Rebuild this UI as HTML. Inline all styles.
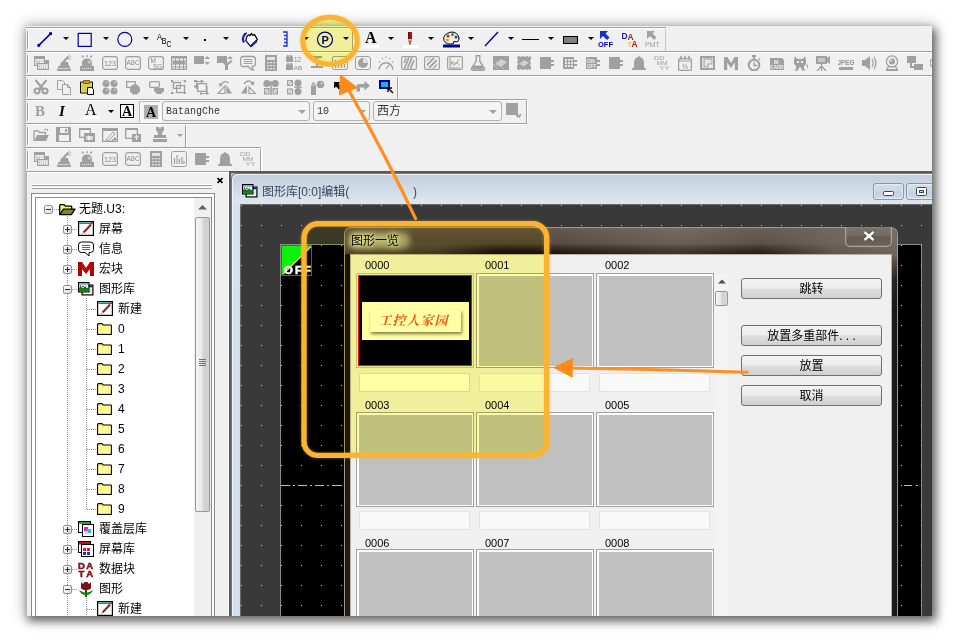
<!DOCTYPE html><html lang="zh"><head><meta charset="utf-8"><title>图形一览</title><style>
*{box-sizing:border-box;margin:0;padding:0}
html,body{width:958px;height:642px;overflow:hidden;background:#fff}
body{position:relative;font-family:"Liberation Sans","Noto Sans CJK SC","WenQuanYi Zen Hei",sans-serif;font-size:12px;color:#000}
.abs,.abs *{position:absolute}
#shadow{position:absolute;left:26px;top:26px;width:906px;height:590px;background:#f0f0f0;
 box-shadow:3px 4px 9px 1px rgba(0,0,0,.55), 0 0 14px 2px rgba(0,0,0,.22)}
#clip{position:absolute;left:26px;top:26px;width:906px;height:590px;overflow:hidden;background:#f0f0f0}
#page{position:absolute;left:-26px;top:-26px;width:958px;height:642px}
#page div,#page span,#page svg,#ann,#ann div,#ann svg{position:absolute}
#ann{left:0;top:0;width:958px;height:642px}
.hl{left:26px;width:906px;height:2px;border-top:1px solid #a0a0a0;background:#fff}
.grip{width:2px;height:18px;border-left:1px solid #a0a0a0;border-right:1px solid #fff}
.vsep{width:2px;border-left:1px solid #a0a0a0;border-right:1px solid #fff}
.dd{width:0;height:0;border-left:3px solid transparent;border-right:3px solid transparent;border-top:3px solid #000}
.combo{border:1px solid #b0b0b0;border-radius:3px;background:#f4f4f4;height:20px}
.combo .t{left:3px;top:2px;font-size:12px;line-height:14px;color:#333;white-space:nowrap}
.cjk{font-family:"Liberation Sans","Noto Sans CJK SC","WenQuanYi Zen Hei",sans-serif;font-size:12px;line-height:14px;white-space:nowrap;color:#000}
.combo .mono,.mono{font-family:"Liberation Mono","Noto Sans CJK SC",monospace;font-size:10px;letter-spacing:0}
.lbl{font-size:11px;line-height:12px;white-space:nowrap}
.thumb{width:118px;height:95px;border:1px solid #a0a0a0;background:#fcfcfc;padding:0}
.thumb i{left:1.5px;top:1.5px;right:1.5px;bottom:1.5px;background:#c0c0c0;display:block;position:absolute}
.fld{width:111px;height:19px;border:1px solid #e2e2e2;border-radius:2px;background:#f9f9f9}
.btn{width:141px;height:21px;border:1px solid #707070;border-radius:3px;
 background:linear-gradient(#f4f4f4 0,#ececec 48%,#dedede 52%,#d0d0d0 100%);text-align:center}
.btn span{position:static!important;font-size:12px;line-height:21px}
</style></head><body>
<div id="shadow"></div><div id="clip"><div id="page">
<div class="hl" style="top:27px;width:640px"></div>
<div class="hl" style="top:51px;width:906px"></div>
<div class="hl" style="top:75px;width:906px"></div>
<div class="hl" style="top:99px;width:501px"></div>
<div class="hl" style="top:123px;width:501px"></div>
<div class="hl" style="top:147px;width:235px"></div>
<div class="hl" style="top:171px;width:235px"></div>
<div class="grip" style="left:27px;top:31px"></div>
<div class="grip" style="left:27px;top:55px"></div>
<div class="grip" style="left:27px;top:79px"></div>
<div class="grip" style="left:27px;top:103px"></div>
<div class="grip" style="left:27px;top:127px"></div>
<div class="grip" style="left:27px;top:151px"></div>
<svg style="left:37px;top:31px" width="16" height="16" viewBox="0 0 16 16" ><path d="M1.8 14.4 L13.6 2.6" stroke="#0000a0" stroke-width="1.5"/><rect x=".4" y="13" width="2.8" height="2.8" fill="#0000a0"/><rect x="12.2" y="1.2" width="2.8" height="2.8" fill="#0000a0"/></svg>
<div class="dd" style="left:63px;top:37px"></div>
<svg style="left:77px;top:31px" width="16" height="16" viewBox="0 0 16 16" ><rect x="1.2" y="2.4" width="13" height="13" fill="none" stroke="#0000a0" stroke-width="1.2"/></svg>
<div class="dd" style="left:103px;top:37px"></div>
<svg style="left:117px;top:31px" width="16" height="16" viewBox="0 0 16 16" ><circle cx="7.8" cy="8.4" r="7" fill="none" stroke="#0000a0" stroke-width="1.2"/></svg>
<div class="dd" style="left:143px;top:37px"></div>
<svg style="left:156px;top:31px" width="17" height="18" viewBox="0 0 17 18" ><text x="1" y="8.6" font-family="Liberation Sans,sans-serif" font-size="9.4" fill="#000" textLength="5" lengthAdjust="spacingAndGlyphs">A</text><text x="5.6" y="12.6" font-family="Liberation Sans,sans-serif" font-size="9.4" fill="#000" textLength="5" lengthAdjust="spacingAndGlyphs">B</text><text x="10.6" y="16.4" font-family="Liberation Sans,sans-serif" font-size="9.4" fill="#000" textLength="5" lengthAdjust="spacingAndGlyphs">C</text></svg>
<div class="dd" style="left:183px;top:37px"></div>
<div style="left:204px;top:39px;width:2px;height:2px;background:#000"></div>
<div class="dd" style="left:223px;top:37px"></div>
<svg style="left:241px;top:32px" width="18" height="16" viewBox="0 0 18 16" ><path d="M6 4.2 L8 2.6 L9 3.8 L10.4 1.4 L12 3.6 L13.4 2.4 L16.4 7.6 L9.8 14.6 L4.8 8.6 Z" fill="#fff" stroke="#000" stroke-width="1.2" stroke-linejoin="round"/><path d="M15.6 8.8 L10 14.2" stroke="#1020c8" stroke-width="2.4"/><path d="M4.6 1.6 q-4.4 3.4 -1.6 9" fill="none" stroke="#1020c8" stroke-width="2.2"/><path d="M3.4 2.2 l2.4 -1.2" stroke="#1020c8" stroke-width="1.6"/></svg>
<svg style="left:281px;top:31px" width="8" height="16" viewBox="0 0 8 16" ><path d="M2 1 h4 v14 h-4 M3 4.5 h3 M3 8 h3 M3 11.5 h3" fill="none" stroke="#2030c0" stroke-width="1.3"/></svg>
<div class="dd" style="left:303px;top:37px"></div>
<svg style="left:316px;top:31px" width="18" height="18" viewBox="0 0 18 18" ><circle cx="9" cy="8.6" r="7.5" fill="none" stroke="#0000a0" stroke-width="1.2"/><text x="9.2" y="12.6" font-family="Liberation Sans,sans-serif" font-size="11" font-weight="bold" fill="#0000a0" text-anchor="middle">P</text></svg>
<div class="dd" style="left:343px;top:37px"></div>
<div class="vsep" style="left:352px;top:29px;height:20px"></div>
<span style="left:365px;top:30px;font-family:'Liberation Serif',serif;font-weight:bold;font-size:16px;line-height:16px;color:#000">A</span>
<div style="left:364px;top:45px;width:15px;height:3px;background:#fff"></div>
<div class="dd" style="left:388px;top:37px"></div>
<svg style="left:407px;top:32px" width="6" height="14" viewBox="0 0 6 14" ><rect x="1" y="0" width="4" height="7" fill="#b01010"/><rect x="1" y="0" width="1.3" height="7" fill="#700808"/><rect x="1" y="7" width="4" height="1.5" fill="#e0c040"/><path d="M1 8.5 h4 l-2 4.5 Z" fill="#907040"/><path d="M2.4 11.5 l.6 1.8 l.6 -1.8 Z" fill="#000"/></svg>
<div style="left:403px;top:45px;width:16px;height:3px;background:#fff"></div>
<div class="dd" style="left:428px;top:37px"></div>
<svg style="left:443px;top:31px" width="17" height="17" viewBox="0 0 17 17" ><path d="M8 1 q7 0 8 6 q0 5 -4 3.5 q-2 -.5 -1.5 2 q-7 2 -9.5 -3 q-2 -6 7 -8.5 Z" fill="#f4f0e0" stroke="#000" stroke-width="1"/><circle cx="5" cy="5" r="1.5" fill="#d02020"/><circle cx="9.5" cy="3.5" r="1.5" fill="#20a020"/><circle cx="13" cy="6" r="1.5" fill="#2040d0"/><circle cx="4.5" cy="9" r="1.5" fill="#d0a020"/><rect x="0" y="13.5" width="17" height="3" fill="#0000a0"/></svg>
<div class="dd" style="left:468px;top:37px"></div>
<svg style="left:484px;top:31px" width="16" height="16" viewBox="0 0 16 16" ><path d="M1 15 L14 1" stroke="#0000a0" stroke-width="1.4"/></svg>
<div class="dd" style="left:508px;top:37px"></div>
<div style="left:522px;top:39px;width:17px;height:1px;background:#000"></div>
<div class="dd" style="left:548px;top:37px"></div>
<div style="left:563px;top:36px;width:15px;height:8px;background:#808080;border:1px solid #000"></div>
<div class="dd" style="left:588px;top:37px"></div>
<svg style="left:598px;top:30px" width="18" height="18" viewBox="0 0 18 18" ><path d="M2 1 h8 l-2.5 2.5 l4 4 l-2.5 2.5 l-4 -4 L2 9 Z" fill="#1030d0"/><text x="0" y="17" font-family="Liberation Sans,sans-serif" font-size="7.5" font-weight="bold" fill="#0000c0" text-anchor="start">OFF</text></svg>
<svg style="left:621px;top:31px" width="18" height="18" viewBox="0 0 18 18" ><text x="0.6" y="8" font-family="Liberation Sans,sans-serif" font-size="8.4" font-weight="bold" fill="#2020b0" text-anchor="start">D</text><text x="6.6" y="9" font-family="Liberation Sans,sans-serif" font-size="8.4" font-weight="bold" fill="#c81010" text-anchor="start">A</text><text x="6.2" y="15.6" font-family="Liberation Sans,sans-serif" font-size="8" font-weight="bold" fill="#f0d030" text-anchor="start">T</text><text x="10.6" y="16" font-family="Liberation Sans,sans-serif" font-size="8.4" font-weight="bold" fill="#c81010" text-anchor="start">A</text></svg>
<svg style="left:644px;top:30px" width="18" height="18" viewBox="0 0 18 18" ><path d="M3 1 h8 l-2.5 2.5 l4 4 l-2.5 2.5 l-4 -4 L3 9 Z" fill="#a0a0a0" stroke="none" stroke-width="1" /><text x="1" y="17" font-family="Liberation Sans,sans-serif" font-size="7" font-weight="normal" fill="#a0a0a0" text-anchor="start">PMT</text></svg>
<div style="left:665px;top:29px;width:1px;height:22px;background:#c8c8c8"></div>
<svg style="left:33px;top:55px" width="16" height="16" viewBox="0 0 16 16" ><rect x="1" y="1" width="11" height="3" fill="#a0a0a0"/><rect x="1.6" y="1.6" width="9.8" height="8.8" rx="0" fill="none" stroke="#a0a0a0" stroke-width="1.2"/><path d="M3 6 h7 M3 8 h4" fill="none" stroke="#a0a0a0" stroke-width="1" stroke-dasharray="1.5 1"/><rect x="4" y="9" width="12" height="6" fill="#f0f0f0"/><rect x="4.6" y="8.6" width="10.8" height="5.8" rx="0" fill="none" stroke="#a0a0a0" stroke-width="1.2"/><rect x="11" y="5" width="5" height="4" fill="#a0a0a0"/><path d="M6 11 h8 M6 13 h8" fill="none" stroke="#a0a0a0" stroke-width="1" stroke-dasharray="1 1"/></svg>
<svg style="left:56px;top:55px" width="16" height="16" viewBox="0 0 16 16" ><path d="M5 7 h7 l1 4 h-9 Z" fill="#a0a0a0" stroke="none" stroke-width="1" /><rect x="2" y="11" width="12" height="2" fill="#a0a0a0"/><rect x="1" y="13.6" width="14" height="2.4" fill="#a0a0a0"/><path d="M7 7.5 L12.5 1.5" fill="none" stroke="#a0a0a0" stroke-width="2.2" /><path d="M13 0 l1 1 M15 1 l-1 1 M15 3.5 l-1 .5 M12 3 l2 2" fill="none" stroke="#a0a0a0" stroke-width="0.9" /></svg>
<svg style="left:79px;top:55px" width="16" height="16" viewBox="0 0 16 16" ><path d="M3 11 V8 Q3 3.5 8 3.5 Q13 3.5 13 8 V11 Z" fill="#a0a0a0" stroke="none" stroke-width="1" /><rect x="1" y="11" width="14" height="5" fill="#a0a0a0"/><path d="M3 13.5 h10" fill="none" stroke="#e8e8e8" stroke-width="1" stroke-dasharray="1 1"/><circle cx="10.5" cy="7" r="1.6" fill="#c8c8c8"/><path d="M8 0 v2.2 M3 .5 l1.6 2 M13 .5 l-1.6 2" fill="none" stroke="#a0a0a0" stroke-width="1.3" /></svg>
<svg style="left:102px;top:55px" width="16" height="16" viewBox="0 0 16 16" ><rect x="0.6" y="1.6" width="14.8" height="12.8" rx="2.5" fill="none" stroke="#a0a0a0" stroke-width="1.2"/><text x="8" y="10.6" font-family="Liberation Sans,sans-serif" font-size="7.2" font-weight="normal" fill="#8a8a8a" text-anchor="middle">123</text></svg>
<svg style="left:125px;top:55px" width="16" height="16" viewBox="0 0 16 16" ><rect x="0.6" y="1.6" width="14.8" height="12.8" rx="2.5" fill="none" stroke="#a0a0a0" stroke-width="1.2"/><text x="8" y="10.4" font-family="Liberation Sans,sans-serif" font-size="6.4" font-weight="normal" fill="#8a8a8a" text-anchor="middle">ABC</text></svg>
<svg style="left:148px;top:55px" width="16" height="16" viewBox="0 0 16 16" ><rect x="0.6" y="1.6" width="14.8" height="12.8" rx="2.5" fill="none" stroke="#a0a0a0" stroke-width="1.2"/><text x="2.5" y="7.8" font-family="Liberation Sans,sans-serif" font-size="6.5" font-weight="normal" fill="#8a8a8a" text-anchor="start">M</text><text x="5" y="13.6" font-family="Liberation Sans,sans-serif" font-size="6.5" font-weight="normal" fill="#8a8a8a" text-anchor="start">SG</text></svg>
<svg style="left:171px;top:55px" width="16" height="16" viewBox="0 0 16 16" ><rect x="0.6" y="1.6" width="14.8" height="12.8" rx="0" fill="none" stroke="#a0a0a0" stroke-width="1.2"/><rect x="0" y="1" width="16" height="2.5" fill="#a0a0a0"/><path d="M0 6 h16 M0 9 h16 M0 12 h16 M4.5 1 v14 M8.5 1 v14 M12.5 1 v14" fill="none" stroke="#a0a0a0" stroke-width="1" /><rect x="2" y="6" width="12" height="3" fill="#a0a0a0"/></svg>
<svg style="left:194px;top:55px" width="16" height="16" viewBox="0 0 16 16" ><rect x="0" y="1" width="10" height="8" fill="#a0a0a0"/><path d="M13.2 1 l2.8 3 h-5.6 Z M13.2 10 l2.8 -3 h-5.6 Z" fill="#a0a0a0" stroke="none" stroke-width="1" /></svg>
<svg style="left:217px;top:55px" width="16" height="16" viewBox="0 0 16 16" ><rect x="0" y="1" width="10" height="7" fill="#a0a0a0"/><path d="M13.2 1 l2.8 3 h-5.6 Z" fill="#a0a0a0" stroke="none" stroke-width="1" /><path d="M6 8 h4 l4 -3 l1.5 1.5 L11 10 v5 h-3 v-5 Z" fill="#a0a0a0" stroke="none" stroke-width="1" /></svg>
<svg style="left:240px;top:55px" width="16" height="16" viewBox="0 0 16 16" ><path d="M3.5 1.5 h9 q3 0 3 3 v4 q0 3 -3 3 h-.5 q0 2.5 2 3.5 q-4 0 -5.5 -3.5 h-5 q-3 0 -3 -3 v-4 q0 -3 3 -3 Z" fill="none" stroke="#a0a0a0" stroke-width="1.3" /><rect x="3.5" y="4" width="9" height="1" fill="#a0a0a0"/><rect x="3.5" y="6" width="9" height="1" fill="#a0a0a0"/><rect x="3.5" y="8" width="9" height="1" fill="#a0a0a0"/></svg>
<svg style="left:263px;top:55px" width="16" height="16" viewBox="0 0 16 16" ><rect x="2" y="0" width="12" height="16" fill="#a0a0a0"/><rect x="4" y="2" width="8" height="3" fill="#e4e4e4"/><rect x="4.2" y="7" width="1.6" height="1.4" fill="#ececec"/><rect x="4.2" y="10" width="1.6" height="1.4" fill="#ececec"/><rect x="4.2" y="13" width="1.6" height="1.4" fill="#ececec"/><rect x="7.2" y="7" width="1.6" height="1.4" fill="#ececec"/><rect x="7.2" y="10" width="1.6" height="1.4" fill="#ececec"/><rect x="7.2" y="13" width="1.6" height="1.4" fill="#ececec"/><rect x="10.2" y="7" width="1.6" height="1.4" fill="#ececec"/><rect x="10.2" y="10" width="1.6" height="1.4" fill="#ececec"/><rect x="10.2" y="13" width="1.6" height="1.4" fill="#ececec"/></svg>
<svg style="left:286px;top:55px" width="16" height="16" viewBox="0 0 16 16" ><rect x="0" y="1.5" width="7" height="5.5" fill="#a0a0a0"/><rect x="0" y="9.5" width="7" height="5.5" fill="#a0a0a0"/><rect x="1" y="0" width="2" height="2" fill="#a0a0a0"/><rect x="4" y="0" width="2" height="2" fill="#a0a0a0"/><rect x="1" y="8" width="2" height="2" fill="#a0a0a0"/><rect x="4" y="8" width="2" height="2" fill="#a0a0a0"/><text x="8" y="7" font-family="Liberation Sans,sans-serif" font-size="6.4" font-weight="normal" fill="#8a8a8a" text-anchor="start">12</text><text x="7.8" y="15" font-family="Liberation Sans,sans-serif" font-size="6.2" font-weight="normal" fill="#8a8a8a" text-anchor="start">AB</text></svg>
<svg style="left:309px;top:55px" width="16" height="16" viewBox="0 0 16 16" ><rect x="3" y="1" width="10" height="2" fill="#a0a0a0"/><rect x="7" y="3" width="2" height="8" fill="#a0a0a0"/><rect x="2" y="11" width="12" height="2" fill="#a0a0a0"/><rect x="4" y="6" width="8" height="1" fill="#a0a0a0"/></svg>
<svg style="left:332px;top:55px" width="16" height="16" viewBox="0 0 16 16" ><rect x="0.5" y="1.5" width="15" height="13" rx="1.5" fill="none" stroke="#a0a0a0" stroke-width="1"/><path d="M3.5 5 v8 M6.5 8 v5 M9.5 6 v7 M12.5 9 v4" fill="none" stroke="#a0a0a0" stroke-width="1.4" /></svg>
<svg style="left:355px;top:55px" width="16" height="16" viewBox="0 0 16 16" ><rect x="0.5" y="1.5" width="15" height="13" rx="2.5" fill="none" stroke="#a0a0a0" stroke-width="1"/><circle cx="8" cy="8" r="5" fill="#a0a0a0"/><path d="M8 8 V3 A5 5 0 0 1 13 8 Z" fill="#e0e0e0" stroke="none" stroke-width="1" /></svg>
<svg style="left:378px;top:55px" width="16" height="16" viewBox="0 0 16 16" ><path d="M1.2 14.5 A6.8 6.8 0 0 1 14.8 14.5" fill="none" stroke="#a0a0a0" stroke-width="1.4" /><path d="M8 14 L11.5 9.5" fill="none" stroke="#a0a0a0" stroke-width="1.2" /><path d="M1 6.5 l1 1 M4 3 l.8 1.2 M8 1.6 v1.4 M12 3 l-.8 1.2 M15 6.5 l-1 1" fill="none" stroke="#a0a0a0" stroke-width="1.1" /></svg>
<svg style="left:401px;top:55px" width="16" height="16" viewBox="0 0 16 16" ><rect x="0.6" y="1.6" width="14.8" height="12.8" rx="1.5" fill="none" stroke="#a0a0a0" stroke-width="1.2"/><path d="M3.5 13.5 L8 2.5 M6.5 13.5 L11 2.5 M9.5 13.5 L12.8 5.5 M3.2 8 L5.2 3" fill="none" stroke="#a0a0a0" stroke-width="1.7" /></svg>
<svg style="left:424px;top:55px" width="16" height="16" viewBox="0 0 16 16" ><rect x="0.6" y="1.6" width="14.8" height="12.8" rx="1.5" fill="none" stroke="#a0a0a0" stroke-width="1.2"/><clipPath id="hc"><circle cx="8" cy="8" r="5.6"/></clipPath><g clip-path="url(#hc)"><path d="M-1 9 L9 -1 M1 12 L12 1 M4 14 L14 4 M7.5 15.5 L16 7" fill="none" stroke="#a0a0a0" stroke-width="1.8" /></g></svg>
<svg style="left:447px;top:55px" width="16" height="16" viewBox="0 0 16 16" ><rect x="0.6" y="1.6" width="14.8" height="12.8" rx="1.5" fill="none" stroke="#a0a0a0" stroke-width="1.2"/><path d="M3 3 v10 h10.5" fill="none" stroke="#a0a0a0" stroke-width="1" /><path d="M3.5 10 L6 6.5 L8.5 9 L12.5 4 M3.5 6 L7 10.5 L10 7.5 L12.8 10.5" fill="none" stroke="#a0a0a0" stroke-width="1" /></svg>
<svg style="left:470px;top:55px" width="16" height="16" viewBox="0 0 16 16" ><path d="M6.2 .8 h3.6 v5.4 l4.6 6.8 q.8 2.2 -1.6 2.2 h-9.6 q-2.4 0 -1.6 -2.2 l4.6 -6.8 Z" fill="none" stroke="#a0a0a0" stroke-width="1.4" /><path d="M4 10.5 h8 l1.8 3 q0 1 -1 1 h-9.6 q-1 0 -1 -1 Z" fill="#a0a0a0" stroke="none" stroke-width="1" /></svg>
<svg style="left:493px;top:55px" width="16" height="16" viewBox="0 0 16 16" ><rect x="0" y="1" width="16" height="14" fill="#a0a0a0"/><path d="M2 9 L8 4 L14 7 L8 12 Z" fill="#d0d0d0" stroke="none" stroke-width="1" /><path d="M0 9 L5 14 M3 6 L11 14" fill="none" stroke="#c8c8c8" stroke-width="0.8" /></svg>
<svg style="left:516px;top:55px" width="16" height="16" viewBox="0 0 16 16" ><path d="M1 2 l2 -1 l2 1 l2 -1 l2 1 l2 -1 l2 1 l2 -1 v3 l-1 2 l1 2 l-1 2 l1 2 v3 l-2 -1 l-2 1 l-2 -1 l-2 1 l-2 -1 l-2 1 l-2 -1 v-3 l1 -2 l-1 -2 l1 -2 Z" fill="#a0a0a0" stroke="none" stroke-width="1" /><path d="M3 9 L8 5 L13 7.5 L8 11.5 Z" fill="#d0d0d0" stroke="none" stroke-width="1" /></svg>
<svg style="left:539px;top:55px" width="16" height="16" viewBox="0 0 16 16" ><path d="M1 2 h11 v3 h3 v2 h-3 v2 h3 v2 h-3 v3 h-11 Z" fill="#a0a0a0" stroke="none" stroke-width="1" /></svg>
<svg style="left:562px;top:55px" width="16" height="16" viewBox="0 0 16 16" ><path d="M1 2 h11 v3 h3 v2 h-3 v2 h3 v2 h-3 v3 h-11 Z" fill="#a0a0a0" stroke="none" stroke-width="1" /><rect x="3" y="4" width="2" height="2" fill="#e8e8e8"/><rect x="3" y="7" width="2" height="2" fill="#e8e8e8"/><rect x="3" y="10" width="2" height="2" fill="#e8e8e8"/><rect x="6" y="4" width="2" height="2" fill="#e8e8e8"/><rect x="6" y="7" width="2" height="2" fill="#e8e8e8"/><rect x="6" y="10" width="2" height="2" fill="#e8e8e8"/><rect x="9" y="4" width="2" height="2" fill="#e8e8e8"/><rect x="9" y="7" width="2" height="2" fill="#e8e8e8"/><rect x="9" y="10" width="2" height="2" fill="#e8e8e8"/></svg>
<svg style="left:585px;top:55px" width="16" height="16" viewBox="0 0 16 16" ><path d="M1 2 h11 v3 h3 v2 h-3 v2 h3 v2 h-3 v3 h-11 Z" fill="#a0a0a0" stroke="none" stroke-width="1" /><text x="2" y="7.5" font-family="Liberation Sans,sans-serif" font-size="5" font-weight="bold" fill="#f0f0f0" text-anchor="start">ON</text><text x="2" y="12.5" font-family="Liberation Sans,sans-serif" font-size="4.6" font-weight="bold" fill="#f0f0f0" text-anchor="start">OFF</text></svg>
<svg style="left:608px;top:55px" width="16" height="16" viewBox="0 0 16 16" ><path d="M1 2 h11 v3 h3 v2 h-3 v2 h3 v2 h-3 v3 h-11 Z" fill="#a0a0a0" stroke="none" stroke-width="1" /></svg>
<svg style="left:631px;top:55px" width="16" height="16" viewBox="0 0 16 16" ><path d="M8 1 q1 0 1 1 q4 1 4 6 v4 l2 2 v1 h-14 v-1 l2 -2 v-4 q0 -5 4 -6 q0 -1 1 -1 Z" fill="#a0a0a0" stroke="none" stroke-width="1" /></svg>
<svg style="left:654px;top:55px" width="16" height="16" viewBox="0 0 16 16" ><text x="0" y="4.8" font-family="Liberation Sans,sans-serif" font-size="5.6" fill="#a0a0a0" textLength="10.5" lengthAdjust="spacingAndGlyphs">DD</text><text x="2.6" y="9.8" font-family="Liberation Sans,sans-serif" font-size="5.6" fill="#a0a0a0" textLength="11" lengthAdjust="spacingAndGlyphs">MM</text><text x="5.4" y="14.8" font-family="Liberation Sans,sans-serif" font-size="5.6" fill="#a0a0a0" textLength="10" lengthAdjust="spacingAndGlyphs">YY</text></svg>
<svg style="left:677px;top:55px" width="16" height="16" viewBox="0 0 16 16" ><rect x="1.65" y="3.65" width="12.7" height="11.7" rx="1" fill="none" stroke="#a0a0a0" stroke-width="1.3"/><path d="M4 .5 l1.2 3 h-2.4 Z M8 .5 l1.2 3 h-2.4 Z M12 .5 l1.2 3 h-2.4 Z" fill="#a0a0a0" stroke="none" stroke-width="1" /><path d="M4 .8 v4 M8 .8 v4 M12 .8 v4" fill="none" stroke="#a0a0a0" stroke-width="1.2" /><rect x="1" y="5.5" width="14" height="1" fill="#a0a0a0"/><text x="8.2" y="14" font-family="Liberation Sans,sans-serif" font-size="7.5" font-weight="bold" fill="#a0a0a0" text-anchor="middle">½</text></svg>
<svg style="left:700px;top:55px" width="16" height="16" viewBox="0 0 16 16" ><rect x="1.1" y="2.1" width="12.8" height="11.8" rx="0" fill="none" stroke="#a0a0a0" stroke-width="2.2"/><path d="M4 4 h8 v5 h-4 v3 h-4 Z" fill="#e6e6e6" stroke="#a0a0a0" stroke-width="1" /><path d="M12.4 2.5 v11 M2.5 12.6 h9" fill="none" stroke="#e8e8e8" stroke-width="1" stroke-dasharray="1 1"/></svg>
<svg style="left:723px;top:55px" width="16" height="16" viewBox="0 0 16 16" ><path d="M1 15 V2 h3.5 L8 8 L11.5 2 H15 V15 h-3.2 V7.5 L8 13 L4.2 7.5 V15 Z" fill="#a0a0a0" stroke="none" stroke-width="1" /></svg>
<svg style="left:746px;top:55px" width="16" height="16" viewBox="0 0 16 16" ><circle cx="8" cy="10" r="5.3" fill="none" stroke="#a0a0a0" stroke-width="2"/><rect x="6" y="0" width="4" height="2" fill="#a0a0a0"/><rect x="7" y="2" width="2" height="3" fill="#a0a0a0"/><path d="M8 7 v3.5 h3" fill="none" stroke="#a0a0a0" stroke-width="1.3" /><path d="M12.5 3.5 l1.5 1.5" fill="none" stroke="#a0a0a0" stroke-width="1.5" /></svg>
<svg style="left:769px;top:55px" width="16" height="16" viewBox="0 0 16 16" ><path d="M1 3 h12 l2 2 v10 h-14 Z" fill="#a0a0a0" stroke="none" stroke-width="1" /><text x="8" y="8.5" font-family="Liberation Sans,sans-serif" font-size="5.2" font-weight="bold" fill="#f0f0f0" text-anchor="middle">M-</text><text x="8" y="13.8" font-family="Liberation Sans,sans-serif" font-size="4.6" font-weight="bold" fill="#f0f0f0" text-anchor="middle">CARD</text></svg>
<svg style="left:792px;top:55px" width="16" height="16" viewBox="0 0 16 16" ><path d="M3 1 l2 3 h6 l2 -3 l1 4 v4 l-2 2 v3 l2 1.5 h-4 l-1 -3 h-2 l-1 3 h-4 l2 -1.5 v-3 l-2 -2 v-4 Z" fill="#a0a0a0" stroke="none" stroke-width="1" /><rect x="5" y="6" width="2" height="2" fill="#f0f0f0"/><rect x="9" y="6" width="2" height="2" fill="#f0f0f0"/><path d="M14 10 q2 0 2 3" fill="none" stroke="#a0a0a0" stroke-width="1.2" /></svg>
<svg style="left:815px;top:55px" width="16" height="16" viewBox="0 0 16 16" ><rect x="1" y="1" width="11" height="8" fill="#a0a0a0"/><path d="M12 3 l3 -2 v8 l-3 -2 Z" fill="#a0a0a0" stroke="none" stroke-width="1" /><rect x="3" y="3" width="7" height="4" fill="#c8c8c8"/><path d="M6.5 9 v3 M6.5 11 L2 16 M6.5 11 L11 16 M6.5 11 v5" fill="none" stroke="#a0a0a0" stroke-width="1.3" /></svg>
<svg style="left:838px;top:55px" width="16" height="16" viewBox="0 0 16 16" ><text x="8" y="9.6" font-family="Liberation Sans,sans-serif" font-size="6.4" font-weight="bold" fill="#909090" text-anchor="middle">JPEG</text><rect x="1" y="12" width="14" height="3" fill="#a0a0a0"/></svg>
<svg style="left:861px;top:55px" width="16" height="16" viewBox="0 0 16 16" ><path d="M1 5 h3 l5 -4 v14 l-5 -4 h-3 Z" fill="#a0a0a0" stroke="none" stroke-width="1" /><path d="M11 4 q2.5 4 0 8 M13 2 q4 6 0 12" fill="none" stroke="#a0a0a0" stroke-width="1.3" /></svg>
<svg style="left:884px;top:55px" width="16" height="16" viewBox="0 0 16 16" ><circle cx="8" cy="6.5" r="5.6" fill="none" stroke="#a0a0a0" stroke-width="1.3"/><circle cx="8" cy="6.5" r="3" fill="#a0a0a0"/><circle cx="7" cy="5.5" r="1" fill="#f0f0f0"/><path d="M3 15 q0 -3 2.5 -3.5 h5 q2.5 .5 2.5 3.5 Z" fill="none" stroke="#a0a0a0" stroke-width="1.2" /><rect x="2" y="14" width="12" height="2" fill="#a0a0a0"/></svg>
<svg style="left:907px;top:55px" width="16" height="16" viewBox="0 0 16 16" ><rect x="0" y="1" width="9" height="7" fill="#a0a0a0"/><rect x="7" y="9" width="9" height="6" fill="#a0a0a0"/><path d="M4 8 v4 h3" fill="none" stroke="#a0a0a0" stroke-width="2" /></svg>
<svg style="left:930px;top:55px" width="16" height="16" viewBox="0 0 16 16" ><circle cx="4" cy="8" r="4" fill="none" stroke="#a0a0a0" stroke-width="1.5"/></svg>
<svg style="left:33px;top:79px" width="16" height="16" viewBox="0 0 16 16" ><path d="M2.5 1 L9.5 9.5 M13.5 1 L6.5 9.5" fill="none" stroke="#a0a0a0" stroke-width="2" /><circle cx="4" cy="12" r="2.5" fill="none" stroke="#a0a0a0" stroke-width="2.2"/><circle cx="12" cy="12" r="2.5" fill="none" stroke="#a0a0a0" stroke-width="2.2"/><rect x="6.5" y="8.5" width="3" height="2.5" fill="#a0a0a0"/></svg>
<svg style="left:56px;top:79px" width="16" height="16" viewBox="0 0 16 16" ><path d="M1.5 1.5 h5 l2 2 v7 h-7 Z" fill="#f0f0f0" stroke="#a0a0a0" stroke-width="1" /><path d="M6.5 5.5 h5 l3 3 v7 h-8 Z" fill="#f0f0f0" stroke="#a0a0a0" stroke-width="1" /><path d="M11.5 5.5 v3 h3" fill="none" stroke="#a0a0a0" stroke-width="1" /></svg>
<svg style="left:79px;top:79px" width="16" height="16" viewBox="0 0 16 16" ><path d="M1.5 3 h12 v11 h-12 Z" fill="#d8d040" stroke="#000" stroke-width="1" /><path d="M2.5 4 h10 v9 h-10 Z" fill="none" stroke="#f0e860" stroke-width="1" stroke-dasharray="1 1"/><path d="M4.5 1.5 h6 v3 h-6 Z" fill="#d09030" stroke="#806020" stroke-width="1" /><path d="M8.5 8.5 h4 l2 2 v5 h-6 Z" fill="#fff" stroke="#000" stroke-width="1" /></svg>
<svg style="left:102px;top:79px" width="16" height="16" viewBox="0 0 16 16" ><circle cx="4" cy="4.5" r="3.5" fill="#a0a0a0"/><circle cx="5" cy="3.3" r=".9" fill="#d8d8d8"/><circle cx="4" cy="12" r="3.5" fill="#a0a0a0"/><circle cx="5" cy="10.8" r=".9" fill="#d8d8d8"/><circle cx="12" cy="4.5" r="3.5" fill="#a0a0a0"/><circle cx="13" cy="3.3" r=".9" fill="#d8d8d8"/><circle cx="12" cy="12" r="3.5" fill="#a0a0a0"/><circle cx="13" cy="10.8" r=".9" fill="#d8d8d8"/></svg>
<svg style="left:125px;top:79px" width="16" height="16" viewBox="0 0 16 16" ><rect x="1.65" y="2.65" width="8.7" height="5.7" rx="0" fill="none" stroke="#a0a0a0" stroke-width="1.3"/><path d="M8 5.5 h4 l3 3 v4 l-3 3 h-4 l-3 -3 v-4 Z" fill="#a0a0a0" stroke="none" stroke-width="1" /></svg>
<svg style="left:148px;top:79px" width="16" height="16" viewBox="0 0 16 16" ><rect x="1.65" y="2.65" width="9.7" height="5.7" rx="1" fill="none" stroke="#a0a0a0" stroke-width="1.3"/><path d="M6 9 h10 v3 l-3 3 h-4 l-3 -3 Z" fill="#a0a0a0" stroke="none" stroke-width="1" /></svg>
<svg style="left:171px;top:79px" width="16" height="16" viewBox="0 0 16 16" ><rect x="2.6" y="3.6" width="6.8" height="5.8" rx="0" fill="none" stroke="#a0a0a0" stroke-width="1.2"/><rect x="5.6" y="6.6" width="7.8" height="6.8" rx="0" fill="none" stroke="#a0a0a0" stroke-width="1.2"/><rect x="0" y="1" width="2" height="2" fill="#a0a0a0"/><rect x="13" y="1" width="2" height="2" fill="#a0a0a0"/><rect x="0" y="13" width="2" height="2" fill="#a0a0a0"/><rect x="13" y="13" width="2" height="2" fill="#a0a0a0"/><path d="M2 2 h11 M14 3 v10 M1 3 v10 M2 14 h11" fill="none" stroke="#a0a0a0" stroke-width="0.8" stroke-dasharray="1 1.5"/></svg>
<svg style="left:194px;top:79px" width="16" height="16" viewBox="0 0 16 16" ><rect x="3.65" y="4.65" width="8.7" height="7.7" rx="0" fill="none" stroke="#a0a0a0" stroke-width="1.3"/><path d="M1 2.5 h9 M2.5 1 v9 M7.5 1 v4 M1 7.5 h3 M13 7 v8 M7 14.5 h8" fill="none" stroke="#a0a0a0" stroke-width="1.2" /><rect x="0" y="1" width="2" height="2" fill="#a0a0a0"/><rect x="6.5" y="1" width="2" height="2" fill="#a0a0a0"/><rect x="0" y="6.5" width="2" height="2" fill="#a0a0a0"/><rect x="12" y="13.5" width="2" height="2" fill="#a0a0a0"/><rect x="6" y="13.5" width="2" height="2" fill="#a0a0a0"/></svg>
<svg style="left:217px;top:79px" width="16" height="16" viewBox="0 0 16 16" ><path d="M1 14.5 L8 7 V14.5 Z" fill="none" stroke="#a0a0a0" stroke-width="1.2" /><path d="M9.5 14.5 V6 L15 14.5 Z" fill="#a0a0a0" stroke="none" stroke-width="1" /><path d="M3.5 6.5 q3 -6 8 -2.5" fill="none" stroke="#a0a0a0" stroke-width="1.3" /><path d="M1.5 4 l1.5 4 l3 -2.5 Z" fill="#a0a0a0" stroke="none" stroke-width="1" /></svg>
<svg style="left:240px;top:79px" width="16" height="16" viewBox="0 0 16 16" ><path d="M1 14.5 L7 6 V14.5 Z" fill="#a0a0a0" stroke="none" stroke-width="1" /><path d="M9 14.5 V8 L15.5 14.5 Z" fill="none" stroke="#a0a0a0" stroke-width="1.2" /><path d="M4 5 q4 -5.5 8.5 -1" fill="none" stroke="#a0a0a0" stroke-width="1.3" /><path d="M14.5 2 l-.8 4.5 l-3.6 -1.8 Z" fill="#a0a0a0" stroke="none" stroke-width="1" /></svg>
<svg style="left:263px;top:79px" width="16" height="16" viewBox="0 0 16 16" ><circle cx="3.8" cy="4.5" r="3.5" fill="#a0a0a0"/><circle cx="12.2" cy="4.5" r="3.5" fill="#a0a0a0"/><rect x="7.2" y="2" width="1.6" height="14" fill="#a0a0a0"/><rect x="1.6" y="9.6" width="4.3" height="5.3" rx="0" fill="none" stroke="#a0a0a0" stroke-width="1.2"/><rect x="10.1" y="9.6" width="4.3" height="5.3" rx="0" fill="none" stroke="#a0a0a0" stroke-width="1.2"/><path d="M2 14.5 l3.5 -4.5 M10.5 10 l3.5 4.5" fill="none" stroke="#a0a0a0" stroke-width="1" /><rect x="3" y="4" width="10" height="1.5" fill="#a0a0a0"/></svg>
<svg style="left:286px;top:79px" width="16" height="16" viewBox="0 0 16 16" ><rect x="1.6" y="1.6" width="4.8" height="4.8" rx="0" fill="none" stroke="#a0a0a0" stroke-width="1.2"/><rect x="1.6" y="10.1" width="4.8" height="4.8" rx="0" fill="none" stroke="#a0a0a0" stroke-width="1.2"/><path d="M2 6 l4 -4 M2 14.5 l4 -4" fill="none" stroke="#a0a0a0" stroke-width="1" /><circle cx="12" cy="4" r="3.5" fill="#a0a0a0"/><circle cx="12" cy="12.5" r="3.5" fill="#a0a0a0"/><rect x="11.2" y="4" width="1.6" height="8" fill="#a0a0a0"/><rect x="8" y="7.6" width="8" height="1.3" fill="#a0a0a0"/></svg>
<svg style="left:309px;top:79px" width="16" height="16" viewBox="0 0 16 16" ><rect x="2" y="7" width="5" height="9" fill="#a0a0a0"/><path d="M4.5 2.5 l2.5 4.5 h-5 Z" fill="#a0a0a0" stroke="none" stroke-width="1" /><path d="M4.5 5 l1 2 h-2 Z" fill="#e0e0e0" stroke="none" stroke-width="1" /><circle cx="11.5" cy="5.5" r="3.8" fill="#a0a0a0"/><circle cx="12.5" cy="4.3" r="1" fill="#d8d8d8"/></svg>
<svg style="left:332px;top:79px" width="16" height="16" viewBox="0 0 16 16" ><path d="M2 3 h6.5 l-2 2 l3.2 3.2 l-2.5 2.5 l-3.2 -3.2 l-2 2 Z" fill="#000" stroke="none" stroke-width="1" /></svg>
<svg style="left:355px;top:79px" width="16" height="16" viewBox="0 0 16 16" ><path d="M1.5 12.5 V7.5 q0 -2.5 2.5 -2.5 h5.5 V2 l5.5 4.8 l-5.5 4.8 V8.6 h-4.5 v3.9 Z" fill="#a0a0a0" stroke="none" stroke-width="1" /></svg>
<svg style="left:378px;top:79px" width="16" height="16" viewBox="0 0 16 16" ><rect x="1" y="1" width="11" height="9" fill="#00008c"/><rect x="3" y="3" width="7" height="5" fill="#18b0e8"/><path d="M10 9 l5 5 M10 9 v4 M10 9 h4" fill="none" stroke="#000" stroke-width="1.4" /></svg>
<div class="vsep" style="left:397px;top:77px;height:22px"></div>
<span style="left:35px;top:102px;font-family:'Liberation Serif',serif;font-weight:bold;font-size:15px;line-height:18px;color:#a0a0a0">B</span>
<span style="left:59px;top:102px;font-family:'Liberation Serif',serif;font-weight:bold;font-style:italic;font-size:15px;line-height:18px;color:#000">I</span>
<span style="left:85px;top:102px;font-family:'Liberation Serif',serif;font-size:16px;line-height:16px;color:#000">A</span>
<div style="left:83px;top:116px;width:16px;height:3px;background:#fff"></div>
<div class="dd" style="left:108px;top:110px"></div>
<div style="left:120px;top:104px;width:14px;height:14px;border:1px solid #000;background:#f8f8f8"></div>
<span style="left:122px;top:104px;font-family:'Liberation Serif',serif;font-weight:bold;font-size:14px;line-height:16px;color:#000">A</span>
<div style="left:139px;top:101px;width:22px;height:22px;border:1px solid #b8b8b8;border-right-color:#fff;border-bottom-color:#fff;background:#f6f6f6"></div>
<div style="left:144px;top:105px;width:14px;height:14px;background:#b0b0b0"></div>
<span style="left:146px;top:105px;font-family:'Liberation Serif',serif;font-weight:bold;font-size:14px;line-height:16px;color:#000">A</span>
<div class="combo" style="left:162px;top:101px;width:148px"><span class="t mono" style="top:3px">BatangChe</span></div>
<div class="dd" style="left:298px;top:110px;border-top-color:#a0a0a0;border-width:4px 4px 0 4px"></div>
<div class="combo" style="left:313px;top:101px;width:57px"><span class="t mono" style="top:3px">10</span></div>
<div class="dd" style="left:358px;top:110px;border-top-color:#a0a0a0;border-width:4px 4px 0 4px"></div>
<div class="combo" style="left:373px;top:101px;width:129px"><span class="t cjk" style="top:2px">西方</span></div>
<div class="dd" style="left:489px;top:110px;border-top-color:#a0a0a0;border-width:4px 4px 0 4px"></div>
<svg style="left:506px;top:103px" width="16" height="16" viewBox="0 0 16 16" ><rect x="0" y="0" width="12" height="12" fill="#a0a0a0"/><path d="M10 11 l1.5 3 l1 -2 l1 2 l1.5 -3" fill="none" stroke="#a0a0a0" stroke-width="1.2" /></svg>
<div class="vsep" style="left:526px;top:101px;height:22px"></div>
<svg style="left:33px;top:127px" width="16" height="16" viewBox="0 0 16 16" ><path d="M1 14 V4 h4 l1.5 1.5 h6 v3" fill="none" stroke="#a0a0a0" stroke-width="1.3" /><path d="M1 14 l3 -6 h12 l-3 6 Z" fill="#a0a0a0" stroke="none" stroke-width="1" /><path d="M11 3 q2 -2 4 0 l-1 1" fill="none" stroke="#a0a0a0" stroke-width="1" /></svg>
<svg style="left:56px;top:127px" width="16" height="16" viewBox="0 0 16 16" ><rect x="0" y="0" width="15" height="15" fill="#a0a0a0"/><rect x="4" y="1" width="8" height="5" fill="#f0f0f0"/><rect x="9" y="2" width="2" height="3" fill="#a0a0a0"/><rect x="3" y="8" width="10" height="6" fill="#f0f0f0"/><rect x="12" y="13" width="1" height="1" fill="#f0f0f0"/></svg>
<svg style="left:79px;top:127px" width="16" height="16" viewBox="0 0 16 16" ><rect x="0.65" y="1.65" width="10.7" height="8.7" rx="0" fill="none" stroke="#a0a0a0" stroke-width="1.3"/><rect x="0" y="1" width="12" height="2" fill="#a0a0a0"/><rect x="5" y="6" width="11" height="9" fill="#a0a0a0"/><rect x="7" y="9" width="7" height="4" fill="#d8d8d8"/><path d="M9 8 l3 3 l-3 3 Z" fill="#f0f0f0" stroke="none" stroke-width="1" /></svg>
<svg style="left:102px;top:127px" width="16" height="16" viewBox="0 0 16 16" ><rect x="0.65" y="1.65" width="14.7" height="12.7" rx="0" fill="none" stroke="#a0a0a0" stroke-width="1.3"/><rect x="0" y="1" width="16" height="3" fill="#a0a0a0"/><path d="M4 13 L11 5 l2 2 L6 14 Z" fill="none" stroke="#a0a0a0" stroke-width="1" /><path d="M9 14 l4 -4 l2 3 Z" fill="#a0a0a0" stroke="none" stroke-width="1" /></svg>
<svg style="left:125px;top:127px" width="16" height="16" viewBox="0 0 16 16" ><rect x="0.65" y="1.65" width="11.7" height="9.7" rx="0" fill="none" stroke="#a0a0a0" stroke-width="1.3"/><rect x="0" y="1" width="13" height="2" fill="#a0a0a0"/><rect x="7" y="7" width="9" height="8" fill="#a0a0a0"/><path d="M9 10 h5 M11.5 8 v5" fill="none" stroke="#f0f0f0" stroke-width="1.2" /></svg>
<svg style="left:152px;top:127px" width="16" height="16" viewBox="0 0 16 16" ><path d="M4 0 h3 l1 2 l1 -2 h3 v3 l-2 3 v2 h4 v3 h-12 v-3 h4 v-2 l-2 -3 Z" fill="#a0a0a0" stroke="none" stroke-width="1" /><rect x="1" y="12" width="14" height="3" fill="#a0a0a0"/></svg>
<div class="dd" style="left:177px;top:134px;border-top-color:#a0a0a0"></div>
<div class="vsep" style="left:185px;top:125px;height:22px"></div>
<svg style="left:33px;top:151px" width="16" height="16" viewBox="0 0 16 16" ><rect x="1" y="1" width="11" height="3" fill="#a0a0a0"/><rect x="1.6" y="1.6" width="9.8" height="8.8" rx="0" fill="none" stroke="#a0a0a0" stroke-width="1.2"/><path d="M3 6 h7 M3 8 h4" fill="none" stroke="#a0a0a0" stroke-width="1" stroke-dasharray="1.5 1"/><rect x="4" y="9" width="12" height="6" fill="#f0f0f0"/><rect x="4.6" y="8.6" width="10.8" height="5.8" rx="0" fill="none" stroke="#a0a0a0" stroke-width="1.2"/><rect x="11" y="5" width="5" height="4" fill="#a0a0a0"/><path d="M6 11 h8 M6 13 h8" fill="none" stroke="#a0a0a0" stroke-width="1" stroke-dasharray="1 1"/></svg>
<svg style="left:56px;top:151px" width="16" height="16" viewBox="0 0 16 16" ><path d="M5 7 h7 l1 4 h-9 Z" fill="#a0a0a0" stroke="none" stroke-width="1" /><rect x="2" y="11" width="12" height="2" fill="#a0a0a0"/><rect x="1" y="13.6" width="14" height="2.4" fill="#a0a0a0"/><path d="M7 7.5 L12.5 1.5" fill="none" stroke="#a0a0a0" stroke-width="2.2" /><path d="M13 0 l1 1 M15 1 l-1 1 M15 3.5 l-1 .5 M12 3 l2 2" fill="none" stroke="#a0a0a0" stroke-width="0.9" /></svg>
<svg style="left:79px;top:151px" width="16" height="16" viewBox="0 0 16 16" ><path d="M3 11 V8 Q3 3.5 8 3.5 Q13 3.5 13 8 V11 Z" fill="#a0a0a0" stroke="none" stroke-width="1" /><rect x="1" y="11" width="14" height="5" fill="#a0a0a0"/><path d="M3 13.5 h10" fill="none" stroke="#e8e8e8" stroke-width="1" stroke-dasharray="1 1"/><circle cx="10.5" cy="7" r="1.6" fill="#c8c8c8"/><path d="M8 0 v2.2 M3 .5 l1.6 2 M13 .5 l-1.6 2" fill="none" stroke="#a0a0a0" stroke-width="1.3" /></svg>
<svg style="left:102px;top:151px" width="16" height="16" viewBox="0 0 16 16" ><rect x="0.6" y="1.6" width="14.8" height="12.8" rx="2.5" fill="none" stroke="#a0a0a0" stroke-width="1.2"/><text x="8" y="10.6" font-family="Liberation Sans,sans-serif" font-size="7.2" font-weight="normal" fill="#8a8a8a" text-anchor="middle">123</text></svg>
<svg style="left:125px;top:151px" width="16" height="16" viewBox="0 0 16 16" ><rect x="0.6" y="1.6" width="14.8" height="12.8" rx="2.5" fill="none" stroke="#a0a0a0" stroke-width="1.2"/><text x="8" y="10.4" font-family="Liberation Sans,sans-serif" font-size="6.4" font-weight="normal" fill="#8a8a8a" text-anchor="middle">ABC</text></svg>
<svg style="left:148px;top:151px" width="16" height="16" viewBox="0 0 16 16" ><rect x="2" y="0" width="12" height="16" fill="#a0a0a0"/><rect x="4" y="2" width="8" height="3" fill="#e4e4e4"/><rect x="4.2" y="7" width="1.6" height="1.4" fill="#ececec"/><rect x="4.2" y="10" width="1.6" height="1.4" fill="#ececec"/><rect x="4.2" y="13" width="1.6" height="1.4" fill="#ececec"/><rect x="7.2" y="7" width="1.6" height="1.4" fill="#ececec"/><rect x="7.2" y="10" width="1.6" height="1.4" fill="#ececec"/><rect x="7.2" y="13" width="1.6" height="1.4" fill="#ececec"/><rect x="10.2" y="7" width="1.6" height="1.4" fill="#ececec"/><rect x="10.2" y="10" width="1.6" height="1.4" fill="#ececec"/><rect x="10.2" y="13" width="1.6" height="1.4" fill="#ececec"/></svg>
<svg style="left:171px;top:151px" width="16" height="16" viewBox="0 0 16 16" ><rect x="0.5" y="0.5" width="15" height="15" rx="2" fill="none" stroke="#a0a0a0" stroke-width="1"/><path d="M3.5 13 v-6 M6 13 v-9 M8.5 13 v-5 M11 13 v-7 M13 13 v-3" fill="none" stroke="#a0a0a0" stroke-width="1.2" /></svg>
<svg style="left:194px;top:151px" width="16" height="16" viewBox="0 0 16 16" ><path d="M1 2 h11 v3 h3 v2 h-3 v2 h3 v2 h-3 v3 h-11 Z" fill="#a0a0a0" stroke="none" stroke-width="1" /></svg>
<svg style="left:217px;top:151px" width="16" height="16" viewBox="0 0 16 16" ><path d="M8 1 q1 0 1 1 q4 1 4 6 v4 l2 2 v1 h-14 v-1 l2 -2 v-4 q0 -5 4 -6 q0 -1 1 -1 Z" fill="#a0a0a0" stroke="none" stroke-width="1" /></svg>
<svg style="left:240px;top:151px" width="16" height="16" viewBox="0 0 16 16" ><text x="0" y="4.8" font-family="Liberation Sans,sans-serif" font-size="5.6" fill="#a0a0a0" textLength="10.5" lengthAdjust="spacingAndGlyphs">DD</text><text x="2.6" y="9.8" font-family="Liberation Sans,sans-serif" font-size="5.6" fill="#a0a0a0" textLength="11" lengthAdjust="spacingAndGlyphs">MM</text><text x="5.4" y="14.8" font-family="Liberation Sans,sans-serif" font-size="5.6" fill="#a0a0a0" textLength="10" lengthAdjust="spacingAndGlyphs">YY</text></svg>
<div class="vsep" style="left:260px;top:149px;height:22px"></div>
<div style="left:26px;top:172px;width:1px;height:445px;background:#b4b4b4"></div>
<div style="left:228px;top:173px;width:2px;height:445px;background:#fafafa"></div>
<div style="left:32px;top:184px;width:180px;height:2px;border-top:1px solid #fff;border-bottom:1px solid #a0a0a0"></div>
<div style="left:32px;top:187px;width:180px;height:2px;border-top:1px solid #fff;border-bottom:1px solid #a0a0a0"></div>
<svg style="left:216px;top:177px" width="8" height="7" viewBox="0 0 8 7"><path d="M1.5 1.2 L6.5 5.8 M6.5 1.2 L1.5 5.8" stroke="#000" stroke-width="1.7"/></svg>
<div style="left:31px;top:193px;width:184px;height:430px;border:1px solid #8a8a8a;background:#fff"></div>
<div style="left:35px;top:197px;width:177px;height:426px;border:1px solid #8a8a8a;background:#fff"></div>
<div style="left:194px;top:198px;width:17px;height:425px;background:#f0f0f0"></div>
<svg style="left:198px;top:204px" width="9" height="6" viewBox="0 0 9 6"><path d="M0 5.5 L4.5 1 L9 5.5 Z" fill="#606060"/></svg>
<div style="left:195px;top:217px;width:15px;height:295px;border:1px solid #989898;border-radius:2px;background:linear-gradient(90deg,#f4f4f4 0,#e9e9e9 45%,#d4d4d4 55%,#cfcfcf 100%)"></div>
<div style="left:199px;top:359px;width:7px;height:1px;background:#707070"></div>
<div style="left:199px;top:361px;width:7px;height:1px;background:#707070"></div>
<div style="left:199px;top:363px;width:7px;height:1px;background:#707070"></div>
<div style="left:199px;top:365px;width:7px;height:1px;background:#707070"></div>
<div style="left:67px;top:216px;width:1px;height:402px;background:repeating-linear-gradient(180deg,#909090 0 1px,transparent 1px 2px)"></div>
<div style="left:86px;top:298px;width:1px;height:212px;background:repeating-linear-gradient(180deg,#909090 0 1px,transparent 1px 2px)"></div>
<div style="left:86px;top:598px;width:1px;height:20px;background:repeating-linear-gradient(180deg,#909090 0 1px,transparent 1px 2px)"></div>
<div style="left:44px;top:205px;width:9px;height:9px;border:1px solid #919191;border-radius:2px;background:linear-gradient(135deg,#fff,#d8d8e0)"></div><div style="left:46px;top:209px;width:5px;height:1px;background:#203060"></div>
<div style="left:54px;top:209px;width:5px;height:1px;background:repeating-linear-gradient(90deg,#909090 0 1px,transparent 1px 2px)"></div>
<svg style="left:59px;top:204px" width="17" height="12" viewBox="0 0 17 12" ><path d="M.7 10.5 V1.4 q0 -.7 .7 -.7 h3.6 l1.4 1.4 h5.6 q.7 0 .7 .7 v2.4" fill="#f8f472" stroke="#000" stroke-width="1.3"/><path d="M.8 10.6 L4.4 5.2 h11.6 L12.4 10.6 Z" fill="#84841c" stroke="#000" stroke-width="1.3" stroke-linejoin="round"/></svg>
<span class="cjk" style="left:79px;top:202px">无题.U3:</span>
<div style="left:68px;top:229px;width:10px;height:1px;background:repeating-linear-gradient(90deg,#909090 0 1px,transparent 1px 2px)"></div>
<div style="left:63px;top:225px;width:9px;height:9px;border:1px solid #919191;border-radius:2px;background:linear-gradient(135deg,#fff,#d8d8e0)"></div><div style="left:65px;top:229px;width:5px;height:1px;background:#203060"></div><div style="left:67px;top:227px;width:1px;height:5px;background:#203060"></div>
<svg style="left:78px;top:221px" width="16" height="15" viewBox="0 0 16 15" ><rect x=".6" y=".6" width="14.8" height="13.8" fill="#fff" stroke="#000" stroke-width="1.2"/><rect x="1.2" y="1.2" width="13.6" height="1.8" fill="#108888"/><path d="M1.5 1.7 h13" stroke="#c8f0f0" stroke-width=".7" stroke-dasharray="1 1"/><rect x="13" y="1.2" width="1.8" height="1.8" fill="#d02020"/><path d="M5.5 11.5 L13 3.5" stroke="#8a1010" stroke-width="2"/><path d="M6 10.2 L12.2 3.6" stroke="#d06040" stroke-width=".6"/><path d="M4.3 12.8 l2.3 -.8 l-1.5 -1.5 Z" fill="#e8c080"/><path d="M4.2 12.9 l1 -.3 l-.7 -.7 Z" fill="#000"/></svg>
<span class="cjk" style="left:99px;top:222px">屏幕</span>
<div style="left:68px;top:249px;width:10px;height:1px;background:repeating-linear-gradient(90deg,#909090 0 1px,transparent 1px 2px)"></div>
<div style="left:63px;top:245px;width:9px;height:9px;border:1px solid #919191;border-radius:2px;background:linear-gradient(135deg,#fff,#d8d8e0)"></div><div style="left:65px;top:249px;width:5px;height:1px;background:#203060"></div><div style="left:67px;top:247px;width:1px;height:5px;background:#203060"></div>
<svg style="left:78px;top:241px" width="16" height="16" viewBox="0 0 16 16" ><path d="M3.5 1 h9 q3 0 3 3 v4.5 q0 3 -3 3 h-1.5 v3.5 l-4 -3.5 h-3.5 q-3 0 -3 -3 v-4.5 q0 -3 3 -3 Z" fill="#fff" stroke="#000" stroke-width="1"/><path d="M4 4.5 h8 M4 6.5 h8 M4 8.5 h8" stroke="#606060" stroke-width="1"/></svg>
<span class="cjk" style="left:99px;top:242px">信息</span>
<div style="left:68px;top:269px;width:10px;height:1px;background:repeating-linear-gradient(90deg,#909090 0 1px,transparent 1px 2px)"></div>
<div style="left:63px;top:265px;width:9px;height:9px;border:1px solid #919191;border-radius:2px;background:linear-gradient(135deg,#fff,#d8d8e0)"></div><div style="left:65px;top:269px;width:5px;height:1px;background:#203060"></div><div style="left:67px;top:267px;width:1px;height:5px;background:#203060"></div>
<svg style="left:78px;top:261px" width="16" height="16" viewBox="0 0 16 16" ><defs><pattern id="mp" width="2" height="2" patternUnits="userSpaceOnUse"><rect width="2" height="2" fill="#b81414"/><rect width="1" height="1" fill="#300606"/><rect x="1" y="1" width="1" height="1" fill="#601010"/></pattern></defs><path d="M0 15 V1 h4 L8 7 L12 1 h4 V15 h-4 V8 L8 13 L4 8 V15 Z" fill="url(#mp)"/><path d="M4 2.5 L8 8.5 L12 2.5" stroke="#d01818" stroke-width="1.3" fill="none"/></svg>
<span class="cjk" style="left:99px;top:262px">宏块</span>
<div style="left:68px;top:289px;width:10px;height:1px;background:repeating-linear-gradient(90deg,#909090 0 1px,transparent 1px 2px)"></div>
<div style="left:63px;top:285px;width:9px;height:9px;border:1px solid #919191;border-radius:2px;background:linear-gradient(135deg,#fff,#d8d8e0)"></div><div style="left:65px;top:289px;width:5px;height:1px;background:#203060"></div>
<svg style="left:78px;top:281px" width="16" height="16" viewBox="0 0 16 16" ><g transform="translate(0,1)"><rect x="4.1" y="3.1" width="10.8" height="9.8" fill="#fff" stroke="#000" stroke-width="1.2"/><rect x="4.7" y="3.7" width="9.6" height="1.6" fill="#181890"/><rect x="12.4" y="6.5" width="1" height="4.5" fill="#c8c8c8"/><rect x=".6" y=".6" width="10.3" height="9.3" fill="#fff" stroke="#000" stroke-width="1.2"/><rect x="1.2" y="1.2" width="9.1" height="1.5" fill="#38b8c8"/><rect x="1.2" y="5.8" width="9.1" height="3.6" fill="#0c8c14"/><path d="M1.2 6.4 l1.8 -1.8 l1.8 1.8 l2.2 -2.2 l2.2 2.2 l1.1 -1 v2.6 h-9.1 Z" fill="#0f7a12"/><rect x="2" y="3.3" width="1" height="1.8" fill="#c02010"/><rect x="4" y="3.8" width="1.8" height="1" fill="#303030"/><rect x="6.8" y="3.4" width="1.8" height="1" fill="#d09090"/></g></svg>
<span class="cjk" style="left:99px;top:282px">图形库</span>
<div style="left:87px;top:309px;width:10px;height:1px;background:repeating-linear-gradient(90deg,#909090 0 1px,transparent 1px 2px)"></div>
<svg style="left:97px;top:301px" width="16" height="15" viewBox="0 0 16 15" ><rect x=".6" y=".6" width="14.8" height="13.8" fill="#fff" stroke="#000" stroke-width="1.2"/><rect x="1.2" y="1.2" width="13.6" height="1.8" fill="#108888"/><path d="M1.5 1.7 h13" stroke="#c8f0f0" stroke-width=".7" stroke-dasharray="1 1"/><rect x="13" y="1.2" width="1.8" height="1.8" fill="#d02020"/><path d="M5.5 11.5 L13 3.5" stroke="#8a1010" stroke-width="2"/><path d="M6 10.2 L12.2 3.6" stroke="#d06040" stroke-width=".6"/><path d="M4.3 12.8 l2.3 -.8 l-1.5 -1.5 Z" fill="#e8c080"/><path d="M4.2 12.9 l1 -.3 l-.7 -.7 Z" fill="#000"/></svg>
<span class="cjk" style="left:118px;top:302px">新建</span>
<div style="left:87px;top:329px;width:10px;height:1px;background:repeating-linear-gradient(90deg,#909090 0 1px,transparent 1px 2px)"></div>
<svg style="left:97px;top:323px" width="15" height="12" viewBox="0 0 15 12" ><path d="M.6 1.6 q0 -1 1 -1 h3.4 l1.2 1.4 h7.6 q.6 0 .6 .6 v8.8 h-13.8 Z" fill="#fdf584" stroke="#000" stroke-width="1.1"/><path d="M1.6 3.4 h11.8 v7.2 h-11.8 Z" fill="#fffa90"/></svg>
<span class="cjk" style="left:118px;top:322px">0</span>
<div style="left:87px;top:349px;width:10px;height:1px;background:repeating-linear-gradient(90deg,#909090 0 1px,transparent 1px 2px)"></div>
<svg style="left:97px;top:343px" width="15" height="12" viewBox="0 0 15 12" ><path d="M.6 1.6 q0 -1 1 -1 h3.4 l1.2 1.4 h7.6 q.6 0 .6 .6 v8.8 h-13.8 Z" fill="#fdf584" stroke="#000" stroke-width="1.1"/><path d="M1.6 3.4 h11.8 v7.2 h-11.8 Z" fill="#fffa90"/></svg>
<span class="cjk" style="left:118px;top:342px">1</span>
<div style="left:87px;top:369px;width:10px;height:1px;background:repeating-linear-gradient(90deg,#909090 0 1px,transparent 1px 2px)"></div>
<svg style="left:97px;top:363px" width="15" height="12" viewBox="0 0 15 12" ><path d="M.6 1.6 q0 -1 1 -1 h3.4 l1.2 1.4 h7.6 q.6 0 .6 .6 v8.8 h-13.8 Z" fill="#fdf584" stroke="#000" stroke-width="1.1"/><path d="M1.6 3.4 h11.8 v7.2 h-11.8 Z" fill="#fffa90"/></svg>
<span class="cjk" style="left:118px;top:362px">2</span>
<div style="left:87px;top:389px;width:10px;height:1px;background:repeating-linear-gradient(90deg,#909090 0 1px,transparent 1px 2px)"></div>
<svg style="left:97px;top:383px" width="15" height="12" viewBox="0 0 15 12" ><path d="M.6 1.6 q0 -1 1 -1 h3.4 l1.2 1.4 h7.6 q.6 0 .6 .6 v8.8 h-13.8 Z" fill="#fdf584" stroke="#000" stroke-width="1.1"/><path d="M1.6 3.4 h11.8 v7.2 h-11.8 Z" fill="#fffa90"/></svg>
<span class="cjk" style="left:118px;top:382px">3</span>
<div style="left:87px;top:409px;width:10px;height:1px;background:repeating-linear-gradient(90deg,#909090 0 1px,transparent 1px 2px)"></div>
<svg style="left:97px;top:403px" width="15" height="12" viewBox="0 0 15 12" ><path d="M.6 1.6 q0 -1 1 -1 h3.4 l1.2 1.4 h7.6 q.6 0 .6 .6 v8.8 h-13.8 Z" fill="#fdf584" stroke="#000" stroke-width="1.1"/><path d="M1.6 3.4 h11.8 v7.2 h-11.8 Z" fill="#fffa90"/></svg>
<span class="cjk" style="left:118px;top:402px">4</span>
<div style="left:87px;top:429px;width:10px;height:1px;background:repeating-linear-gradient(90deg,#909090 0 1px,transparent 1px 2px)"></div>
<svg style="left:97px;top:423px" width="15" height="12" viewBox="0 0 15 12" ><path d="M.6 1.6 q0 -1 1 -1 h3.4 l1.2 1.4 h7.6 q.6 0 .6 .6 v8.8 h-13.8 Z" fill="#fdf584" stroke="#000" stroke-width="1.1"/><path d="M1.6 3.4 h11.8 v7.2 h-11.8 Z" fill="#fffa90"/></svg>
<span class="cjk" style="left:118px;top:422px">5</span>
<div style="left:87px;top:449px;width:10px;height:1px;background:repeating-linear-gradient(90deg,#909090 0 1px,transparent 1px 2px)"></div>
<svg style="left:97px;top:443px" width="15" height="12" viewBox="0 0 15 12" ><path d="M.6 1.6 q0 -1 1 -1 h3.4 l1.2 1.4 h7.6 q.6 0 .6 .6 v8.8 h-13.8 Z" fill="#fdf584" stroke="#000" stroke-width="1.1"/><path d="M1.6 3.4 h11.8 v7.2 h-11.8 Z" fill="#fffa90"/></svg>
<span class="cjk" style="left:118px;top:442px">6</span>
<div style="left:87px;top:469px;width:10px;height:1px;background:repeating-linear-gradient(90deg,#909090 0 1px,transparent 1px 2px)"></div>
<svg style="left:97px;top:463px" width="15" height="12" viewBox="0 0 15 12" ><path d="M.6 1.6 q0 -1 1 -1 h3.4 l1.2 1.4 h7.6 q.6 0 .6 .6 v8.8 h-13.8 Z" fill="#fdf584" stroke="#000" stroke-width="1.1"/><path d="M1.6 3.4 h11.8 v7.2 h-11.8 Z" fill="#fffa90"/></svg>
<span class="cjk" style="left:118px;top:462px">7</span>
<div style="left:87px;top:489px;width:10px;height:1px;background:repeating-linear-gradient(90deg,#909090 0 1px,transparent 1px 2px)"></div>
<svg style="left:97px;top:483px" width="15" height="12" viewBox="0 0 15 12" ><path d="M.6 1.6 q0 -1 1 -1 h3.4 l1.2 1.4 h7.6 q.6 0 .6 .6 v8.8 h-13.8 Z" fill="#fdf584" stroke="#000" stroke-width="1.1"/><path d="M1.6 3.4 h11.8 v7.2 h-11.8 Z" fill="#fffa90"/></svg>
<span class="cjk" style="left:118px;top:482px">8</span>
<div style="left:87px;top:509px;width:10px;height:1px;background:repeating-linear-gradient(90deg,#909090 0 1px,transparent 1px 2px)"></div>
<svg style="left:97px;top:503px" width="15" height="12" viewBox="0 0 15 12" ><path d="M.6 1.6 q0 -1 1 -1 h3.4 l1.2 1.4 h7.6 q.6 0 .6 .6 v8.8 h-13.8 Z" fill="#fdf584" stroke="#000" stroke-width="1.1"/><path d="M1.6 3.4 h11.8 v7.2 h-11.8 Z" fill="#fffa90"/></svg>
<span class="cjk" style="left:118px;top:502px">9</span>
<div style="left:68px;top:529px;width:10px;height:1px;background:repeating-linear-gradient(90deg,#909090 0 1px,transparent 1px 2px)"></div>
<div style="left:63px;top:525px;width:9px;height:9px;border:1px solid #919191;border-radius:2px;background:linear-gradient(135deg,#fff,#d8d8e0)"></div><div style="left:65px;top:529px;width:5px;height:1px;background:#203060"></div><div style="left:67px;top:527px;width:1px;height:5px;background:#203060"></div>
<svg style="left:78px;top:521px" width="16" height="16" viewBox="0 0 16 16" ><rect x=".5" y=".5" width="12" height="11" fill="#fff" stroke="#000"/><rect x="1" y="1" width="11" height="2" fill="#30a030"/><rect x="4.5" y="3.5" width="11" height="12" fill="#fff" stroke="#000"/><rect x="6" y="6" width="4" height="4" fill="#e020e0"/><rect x="9" y="8" width="4" height="4" fill="#20c0e0"/><rect x="7" y="10" width="3" height="3" fill="#f0e020"/></svg>
<span class="cjk" style="left:99px;top:522px">覆盖层库</span>
<div style="left:68px;top:549px;width:10px;height:1px;background:repeating-linear-gradient(90deg,#909090 0 1px,transparent 1px 2px)"></div>
<div style="left:63px;top:545px;width:9px;height:9px;border:1px solid #919191;border-radius:2px;background:linear-gradient(135deg,#fff,#d8d8e0)"></div><div style="left:65px;top:549px;width:5px;height:1px;background:#203060"></div><div style="left:67px;top:547px;width:1px;height:5px;background:#203060"></div>
<svg style="left:78px;top:541px" width="16" height="16" viewBox="0 0 16 16" ><rect x=".5" y=".5" width="12" height="11" fill="#fff" stroke="#000"/><rect x="1" y="1" width="11" height="2.5" fill="#c01010"/><rect x="3.5" y="3.5" width="12" height="12" fill="#fff" stroke="#000"/><rect x="5" y="7" width="3" height="3" fill="#d02020"/><rect x="9" y="7" width="3" height="3" fill="#d02020"/><rect x="5" y="11" width="3" height="3" fill="#2030c0"/><rect x="9" y="11" width="3" height="3" fill="#2030c0"/></svg>
<span class="cjk" style="left:99px;top:542px">屏幕库</span>
<div style="left:68px;top:569px;width:10px;height:1px;background:repeating-linear-gradient(90deg,#909090 0 1px,transparent 1px 2px)"></div>
<div style="left:63px;top:565px;width:9px;height:9px;border:1px solid #919191;border-radius:2px;background:linear-gradient(135deg,#fff,#d8d8e0)"></div><div style="left:65px;top:569px;width:5px;height:1px;background:#203060"></div><div style="left:67px;top:567px;width:1px;height:5px;background:#203060"></div>
<svg style="left:78px;top:561px" width="16" height="17" viewBox="0 0 16 17" ><text x="0" y="7.8" font-family="Liberation Sans,sans-serif" font-size="9.5" font-weight="bold" fill="#c81414" stroke="#500808" stroke-width=".5">D</text><text x="8.2" y="7.8" font-family="Liberation Sans,sans-serif" font-size="9.5" font-weight="bold" fill="#c81414" stroke="#500808" stroke-width=".5">A</text><text x="0.6" y="16" font-family="Liberation Sans,sans-serif" font-size="9.5" font-weight="bold" fill="#c81414" stroke="#500808" stroke-width=".5">T</text><text x="8.2" y="16" font-family="Liberation Sans,sans-serif" font-size="9.5" font-weight="bold" fill="#c81414" stroke="#500808" stroke-width=".5">A</text></svg>
<span class="cjk" style="left:99px;top:562px">数据块</span>
<div style="left:68px;top:589px;width:10px;height:1px;background:repeating-linear-gradient(90deg,#909090 0 1px,transparent 1px 2px)"></div>
<div style="left:63px;top:585px;width:9px;height:9px;border:1px solid #919191;border-radius:2px;background:linear-gradient(135deg,#fff,#d8d8e0)"></div><div style="left:65px;top:589px;width:5px;height:1px;background:#203060"></div>
<svg style="left:78px;top:581px" width="16" height="16" viewBox="0 0 16 16" ><path d="M3 1 l2 2 l1.5 -2 h3 l1.5 2 l2 -2 v6 q-1 2 -5 2 q-4 0 -5 -2 Z" fill="#801018"/><path d="M8 9 v7" stroke="#106010" stroke-width="2"/><path d="M1 9 q2 5 7 5 q5 0 7 -5 q-3 2 -7 3 q-4 -1 -7 -3 Z" fill="#108010"/></svg>
<span class="cjk" style="left:99px;top:582px">图形</span>
<div style="left:87px;top:609px;width:10px;height:1px;background:repeating-linear-gradient(90deg,#909090 0 1px,transparent 1px 2px)"></div>
<svg style="left:97px;top:601px" width="16" height="15" viewBox="0 0 16 15" ><rect x=".6" y=".6" width="14.8" height="13.8" fill="#fff" stroke="#000" stroke-width="1.2"/><rect x="1.2" y="1.2" width="13.6" height="1.8" fill="#108888"/><path d="M1.5 1.7 h13" stroke="#c8f0f0" stroke-width=".7" stroke-dasharray="1 1"/><rect x="13" y="1.2" width="1.8" height="1.8" fill="#d02020"/><path d="M5.5 11.5 L13 3.5" stroke="#8a1010" stroke-width="2"/><path d="M6 10.2 L12.2 3.6" stroke="#d06040" stroke-width=".6"/><path d="M4.3 12.8 l2.3 -.8 l-1.5 -1.5 Z" fill="#e8c080"/><path d="M4.2 12.9 l1 -.3 l-.7 -.7 Z" fill="#000"/></svg>
<span class="cjk" style="left:118px;top:602px">新建</span>
<div style="left:229px;top:171px;width:720px;height:460px;border-left:2px solid #5a5a5a;border-top:2px solid #5a5a5a;background:#b8bcc0"></div>
<div style="left:231px;top:173px;width:720px;height:460px;border:1px solid #70777f;border-radius:6px 6px 0 0;background:linear-gradient(180deg,#c2cedb 0,#ccd7e3 10px,#dde6f0 29px,#d6e1ec 30px,#d3dfeb 100%);box-shadow:inset 1px 1px 0 #eef3f8"></div>
<svg style="left:242px;top:183px" width="16" height="16" viewBox="0 0 16 16" ><g transform="translate(0,1)"><rect x="4.1" y="3.1" width="10.8" height="9.8" fill="#fff" stroke="#000" stroke-width="1.2"/><rect x="4.7" y="3.7" width="9.6" height="1.6" fill="#181890"/><rect x="12.4" y="6.5" width="1" height="4.5" fill="#c8c8c8"/><rect x=".6" y=".6" width="10.3" height="9.3" fill="#fff" stroke="#000" stroke-width="1.2"/><rect x="1.2" y="1.2" width="9.1" height="1.5" fill="#38b8c8"/><rect x="1.2" y="5.8" width="9.1" height="3.6" fill="#0c8c14"/><path d="M1.2 6.4 l1.8 -1.8 l1.8 1.8 l2.2 -2.2 l2.2 2.2 l1.1 -1 v2.6 h-9.1 Z" fill="#0f7a12"/><rect x="2" y="3.3" width="1" height="1.8" fill="#c02010"/><rect x="4" y="3.8" width="1.8" height="1" fill="#303030"/><rect x="6.8" y="3.4" width="1.8" height="1" fill="#d09090"/></g></svg>
<span class="cjk" style="left:262px;top:185px;color:#3a485c">图形库[0:0]编辑(</span>
<span class="cjk" style="left:413px;top:185px;color:#3a485c">)</span>
<div style="left:873px;top:183px;width:31px;height:17px;border:1px solid #8796ab;border-radius:3px;background:linear-gradient(#d3deea,#cad7e5 50%,#c0cfe0 51%,#cfdbe8);box-shadow:inset 0 0 0 1px rgba(255,255,255,.45)"></div>
<div style="left:883px;top:191px;width:11px;height:5px;border:1px solid #3a4252;border-radius:1.5px;background:#fff"></div>
<div style="left:906px;top:183px;width:31px;height:17px;border:1px solid #8796ab;border-radius:3px;background:linear-gradient(#d3deea,#cad7e5 50%,#c0cfe0 51%,#cfdbe8);box-shadow:inset 0 0 0 1px rgba(255,255,255,.45)"></div>
<div style="left:916px;top:187px;width:11px;height:9px;border:1px solid #3a4252;border-radius:1.5px;background:#fff"></div>
<div style="left:919px;top:190px;width:5px;height:3px;border:1px solid #3a4252;background:#c8d0dc"></div>
<div style="left:240px;top:204px;width:700px;height:420px;background:#393939;border-top:1px solid #6a6a6a;border-left:1px solid #6a6a6a"></div>
<div style="left:280px;top:244px;width:642px;height:380px;background:#000;border:1px solid #8a8a8a"></div>
<div style="left:231px;top:205px;width:710px;height:420px;background-image:radial-gradient(circle at 10.5px .5px,#c8c8c8 0,#c8c8c8 .6px,transparent .9px);background-size:20px 20px"></div>
<div style="left:281px;top:485px;width:62px;height:1px;background:repeating-linear-gradient(90deg,#c0c0c0 0 9px,transparent 9px 12px,#c0c0c0 12px 14px,transparent 14px 17px)"></div>
<div style="left:898px;top:485px;width:24px;height:1px;background:repeating-linear-gradient(90deg,transparent 0 6px,#c0c0c0 6px 14px,transparent 14px 18px,#c0c0c0 18px 20px,transparent 20px 24px)"></div>
<svg style="left:281px;top:245px" width="31" height="31" viewBox="0 0 31 31"><rect x=".5" y=".5" width="30" height="30" fill="#000" stroke="#1a8a1a"/><path d="M1 1 H30 L1 29 Z" fill="#0cf20c"/><path d="M1.5 29.5 L30 1.5" stroke="#f4f418" stroke-width="1.4"/><text x="3" y="29" font-family="Liberation Sans,sans-serif" font-size="11.5" font-weight="bold" fill="#fff" stroke="#fff" stroke-width=".5" textLength="27" lengthAdjust="spacing">OFF</text></svg>
<div style="left:344px;top:227px;width:554px;height:400px;border-radius:7px 7px 0 0;border:1px solid #a09890;border-bottom:none;background:linear-gradient(180deg,#655950 0,#5e524a 3px,#55493f 15px,#3a2f28 19px,#1c140f 24px,#19120e 28px,#241c17 100%)"></div>
<div style="left:345px;top:228px;width:552px;height:26px;border-radius:6px 6px 0 0;background:linear-gradient(100deg,rgba(255,255,255,0) 0,rgba(255,255,255,.0) 35%,rgba(200,190,180,.20) 60%,rgba(200,190,180,.08) 75%,rgba(255,255,255,0) 100%)"></div>
<div style="left:345px;top:240px;width:150px;height:14px;background:linear-gradient(90deg,rgba(104,94,78,.7) 0,rgba(104,94,78,.55) 60%,rgba(104,94,78,0) 100%);-webkit-mask-image:linear-gradient(180deg,transparent 0,#000 6px);mask-image:linear-gradient(180deg,transparent 0,#000 6px)"></div>
<div style="left:760px;top:228px;width:137px;height:26px;border-radius:0 6px 0 0;background:linear-gradient(90deg,rgba(118,109,102,0) 0,rgba(118,109,102,.75) 55%,rgba(120,111,104,.9) 100%)"></div>
<div style="left:892px;top:254px;width:5px;height:370px;background:linear-gradient(180deg,#6e665f 0,#4e463f 10px,#2a221d 26px,#1d1612 60px,#1d1612 100%)"></div>
<div style="left:348px;top:232px;width:62px;height:17px;border-radius:8px;background:rgba(228,224,216,.58);filter:blur(3px)"></div><span class="cjk" style="left:351px;top:234px;color:#000;text-shadow:0 0 4px #fff,0 0 6px #fff">图形一览</span>
<div style="left:845px;top:227px;width:47px;height:20px;border:1px solid #aaa49d;border-top:none;border-radius:0 0 5px 5px;background:linear-gradient(#7c736c,#736a63 45%,#655c55 50%,#6a615a);box-shadow:inset 0 0 0 1px rgba(255,255,255,.10)"></div>
<svg style="left:862px;top:230px" width="14" height="12" viewBox="0 0 14 12"><path d="M2.5 2 L11.5 10 M11.5 2 L2.5 10" stroke="#4a443e" stroke-width="3.8"/><path d="M2.5 2 L11.5 10 M11.5 2 L2.5 10" stroke="#fff" stroke-width="2.4"/></svg>
<div style="left:350px;top:254px;width:542px;height:370px;background:#f0f0f0;border:1px solid #b8b0a6"></div>
<span class="lbl" style="left:365px;top:259px">0000</span>
<div class="thumb" style="left:356px;top:273px;background:#f0e8d8;border-color:#c8c0b0"><i style="left:1px;top:1px;right:1px;bottom:1px;background:#000;border:1px solid #e01818"></i></div>
<div style="left:362px;top:302px;width:107px;height:38px;background:#fffffa"></div>
<div style="left:370px;top:310px;width:91px;height:22px;background:#fff;box-shadow:1px 2px 3px rgba(70,70,40,.7), -1px -1px 1px rgba(255,255,255,.9)"></div>
<span style="left:368px;top:310px;width:91px;height:22px;text-align:center;font-family:'Liberation Serif','Noto Serif CJK SC',serif;font-weight:bold;font-style:italic;font-size:13px;line-height:22px;letter-spacing:1px;color:#ea5a1e;white-space:nowrap">工控人家园</span>
<div class="fld" style="left:359px;top:373px;background:#fff;border-color:#d8d8d0"></div>
<span class="lbl" style="left:485px;top:259px">0001</span>
<div class="thumb" style="left:476px;top:273px"><i></i></div>
<div class="fld" style="left:479px;top:373px"></div>
<span class="lbl" style="left:605px;top:259px">0002</span>
<div class="thumb" style="left:596px;top:273px"><i></i></div>
<div class="fld" style="left:599px;top:373px"></div>
<span class="lbl" style="left:365px;top:399px">0003</span>
<div class="thumb" style="left:356px;top:412px"><i></i></div>
<div class="fld" style="left:359px;top:511px"></div>
<span class="lbl" style="left:485px;top:399px">0004</span>
<div class="thumb" style="left:476px;top:412px"><i></i></div>
<div class="fld" style="left:479px;top:511px"></div>
<span class="lbl" style="left:605px;top:399px">0005</span>
<div class="thumb" style="left:596px;top:412px"><i></i></div>
<div class="fld" style="left:599px;top:511px"></div>
<span class="lbl" style="left:365px;top:536.5px">0006</span>
<div class="thumb" style="left:356px;top:549px"><i></i></div>
<div class="fld" style="left:359px;top:648px"></div>
<span class="lbl" style="left:485px;top:536.5px">0007</span>
<div class="thumb" style="left:476px;top:549px"><i></i></div>
<div class="fld" style="left:479px;top:648px"></div>
<span class="lbl" style="left:605px;top:536.5px">0008</span>
<div class="thumb" style="left:596px;top:549px"><i></i></div>
<div class="fld" style="left:599px;top:648px"></div>
<div style="left:714px;top:274px;width:14px;height:350px;background:#f3f3f3"></div>
<svg style="left:718px;top:279px" width="8" height="5" viewBox="0 0 8 5"><path d="M0 4.5 L4 .5 L8 4.5 Z" fill="#505050"/></svg>
<div style="left:715px;top:291px;width:13px;height:15px;border:1px solid #989898;border-radius:2px;background:linear-gradient(90deg,#f6f6f6,#e6e6e6 45%,#d2d2d2 55%,#d8d8d8)"></div>
<div class="btn" style="left:741px;top:278px"><span class="cjk">跳转</span></div>
<div class="btn" style="left:741px;top:325px"><span class="cjk">放置多重部件. . .</span></div>
<div class="btn" style="left:741px;top:355px"><span class="cjk">放置</span></div>
<div class="btn" style="left:741px;top:385px"><span class="cjk">取消</span></div>
</div></div>
<div id="ann"><div style="left:304px;top:224px;width:243px;height:231px;border-radius:13px;background:#ffffa6;mix-blend-mode:multiply"></div>
<div style="left:303px;top:17px;width:54px;height:47px;border-radius:50%;background:#ffffa6;mix-blend-mode:multiply"></div>
<svg style="left:0;top:0" width="958" height="642" viewBox="0 0 958 642"><defs><filter id="gl" x="-5%" y="-5%" width="110%" height="110%"><feGaussianBlur stdDeviation="1.2"/></filter></defs><rect x="304" y="223.8" width="242.7" height="231.6" rx="14" fill="none" stroke="#fbb431" stroke-width="7" opacity=".28" filter="url(#gl)"/><rect x="304" y="223.8" width="242.7" height="231.6" rx="14" fill="none" stroke="#fbb431" stroke-width="5.4"/><ellipse cx="330" cy="40.7" rx="27.3" ry="23.5" fill="none" stroke="#fbb431" stroke-width="7" opacity=".3" filter="url(#gl)"/><ellipse cx="330" cy="40.7" rx="27.3" ry="23.5" fill="none" stroke="#fbb431" stroke-width="5"/><path d="M349.5 91.5 Q386 156 415.6 218.6" fill="none" stroke="#ff8f22" stroke-width="3.3" stroke-linecap="round"/><path d="M340.6 75 L357.2 87.6 L339.4 95 Z" fill="#ff8a18" stroke="#ff8a18" stroke-width="1" stroke-linejoin="round"/><path d="M571 367.9 Q660 369 747.4 372.3" fill="none" stroke="#ff8f22" stroke-width="3" stroke-linecap="round"/><path d="M554 367.6 L572.2 358.8 L572.2 377 Z" fill="#ff8a18" stroke="#ff8a18" stroke-width="1" stroke-linejoin="round"/></svg></div>
</body></html>
